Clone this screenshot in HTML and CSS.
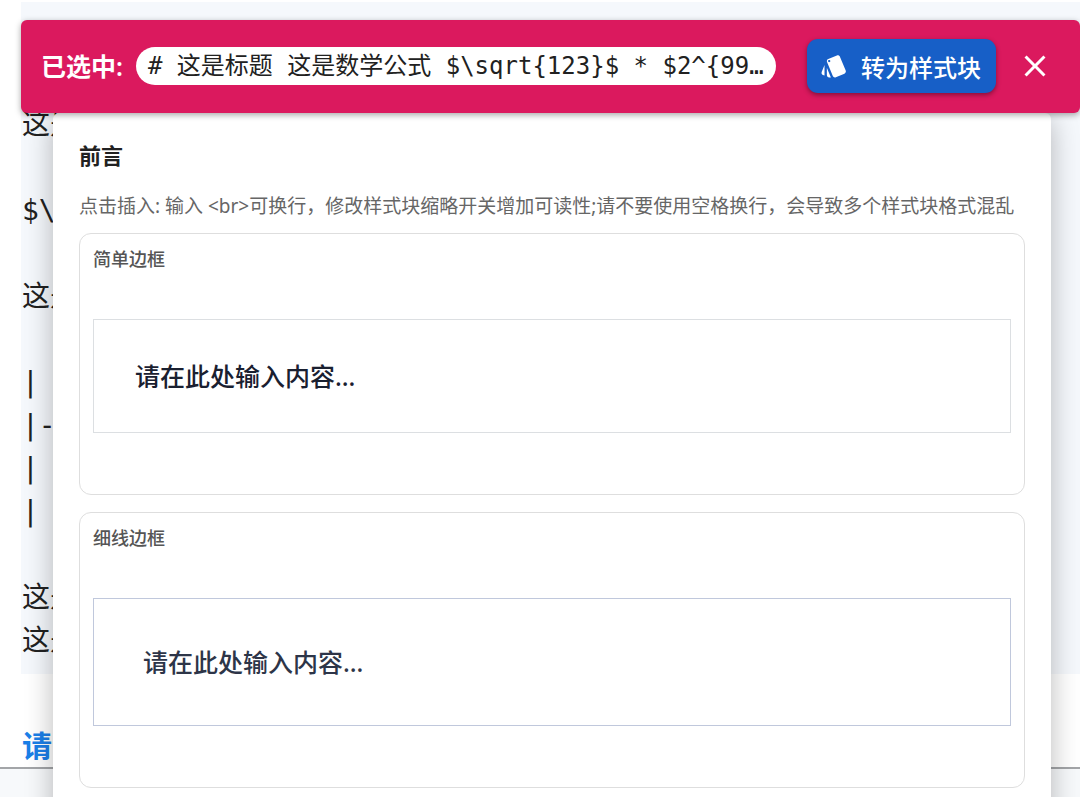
FILE: index.html
```
<!DOCTYPE html>
<html lang="zh-CN">
<head>
  <meta charset="utf-8">
  <title>样式块</title>
  <link rel="stylesheet" href="styles.css">
</head>
<body>
  <div class="page">
    <main class="editor-area">
      <pre class="editor"># 这是标题

这是数学公式

$\

这是

|
|-
|
|

这是
这是</pre>
      <p class="hint"><a href="#">请</a></p>
    </main>

    <div class="overlay">
      <!-- Selection toolbar -->
      <div class="toolbar">
        <span class="toolbar-label">已选中:</span>
        <code class="selection"># 这是标题 这是数学公式 $\sqrt{123}$ * $2^{99}$ 这是表格</code>
        <button class="convert" type="button">
          <svg viewBox="0 0 24 24" aria-hidden="true"><path d="M2.53 19.65l1.34.56v-9.03l-2.43 5.86c-.41 1.02.08 2.19 1.09 2.61zm19.5-3.7L17.07 3.98c-.31-.75-1.04-1.21-1.81-1.23-.26 0-.53.04-.79.15L7.1 5.95c-.75.31-1.21 1.03-1.23 1.8-.01.27.04.54.15.8l4.96 11.97c.31.76 1.05 1.22 1.83 1.23.26 0 .52-.05.77-.15l7.36-3.05c1.02-.42 1.51-1.59 1.09-2.6zM7.88 8.75c-.55 0-1-.45-1-1s.45-1 1-1 1 .45 1 1-.45 1-1 1zm-2 11c0 1.1.9 2 2 2h1.45l-3.45-8.34v6.34z"/></svg>
          转为样式块
        </button>
        <button class="close" type="button" aria-label="关闭">
          <svg viewBox="0 0 24 24" aria-hidden="true"><path d="M19 6.41L17.59 5 12 10.59 6.41 5 5 6.41 10.59 12 5 17.59 6.41 19 12 13.41 17.59 19 19 17.59 13.41 12z"/></svg>
        </button>
      </div>

      <!-- Style block list -->
      <section class="panel">
        <h2>前言</h2>
        <p class="tip">点击插入: 输入 &lt;br&gt;可换行，修改样式块缩略开关增加可读性;请不要使用空格换行，会导致多个样式块格式混乱</p>
        <div class="card">
          <h3>简单边框</h3>
          <div class="sample simple">请在此处输入内容...</div>
        </div>
        <div class="card">
          <h3>细线边框</h3>
          <div class="sample thin">请在此处输入内容...</div>
        </div>
      </section>
    </div>
  </div>
</body>
</html>
```
FILE: styles.css
```
* {
  box-sizing: border-box;
}
body {
  margin: 0;
  font-family: "Noto Sans", "Noto Sans CJK SC", sans-serif;
  color: #212121;
  background-color: #f7f9fb;
}
.page {
  position: relative;
  height: 100vh;
  overflow: hidden;
}

.editor-area {
  padding: 2px 0 0 21px;
  background-color: white;
  border-bottom: 2px solid #a3a5a8;
}
.editor {
  margin: 0;
  padding: 15px 0 12px 1px;
  background-color: #f5f8fc;
  font-family: "DejaVu Sans Mono", "Noto Sans CJK SC", monospace;
  font-size: 28px;
  line-height: 43px;
}
.hint {
  margin: 0;
  padding: 51px 0 0 1px;
  font-size: 30px;
  line-height: 42px;
  font-weight: bold;
}
.hint a {
  color: #1a7fe8;
  text-decoration: none;
}

.overlay {
  position: absolute;
  top: 20px;
  left: 21px;
  right: 0;
}
.toolbar {
  position: relative;
  z-index: 1;
  display: flex;
  align-items: center;
  padding: 19px 27px 20px 20px;
  background-color: #db195e;
  border-radius: 6px;
  box-shadow: 0 2px 6px rgba(0,0,0,0.35);
}
.toolbar-label {
  margin-right: 13px;
  color: white;
  font-size: 25px;
  line-height: 38px;
  font-weight: 600;
  white-space: nowrap;
}
.selection {
  flex: 1;
  min-width: 0;
  padding: 0 8px 0 12px;
  background-color: white;
  border-radius: 19px;
  font-family: "DejaVu Sans Mono", "Noto Sans CJK SC", monospace;
  font-size: 24px;
  line-height: 38px;
  white-space: nowrap;
  overflow: hidden;
  text-overflow: ellipsis;
}
.convert {
  display: flex;
  align-items: center;
  gap: 13px;
  height: 54px;
  margin: 0 21px 0 31px;
  padding: 0 15px 0 13px;
  border: none;
  border-radius: 11px;
  background-color: #175fc7;
  color: white;
  font-family: inherit;
  font-size: 24px;
  font-weight: 500;
  white-space: nowrap;
  box-shadow: 0 2px 5px rgba(0,0,0,0.4);
  cursor: pointer;
}
.convert svg {
  width: 28px;
  height: 28px;
  fill: white;
}
.close {
  display: flex;
  padding: 0;
  border: none;
  background: none;
  cursor: pointer;
}
.close svg {
  width: 36px;
  height: 36px;
  fill: white;
}

.panel {
  margin: 0 29px 0 32px;
  padding: 26px;
  background-color: white;
  border-radius: 6px;
  box-shadow: 0 6px 28px rgba(0,0,0,0.28);
}
.panel h2 {
  margin: 0;
  font-size: 22px;
  line-height: 32px;
}
.tip {
  margin: 20px 0 12px;
  color: #666;
  font-size: 19px;
  line-height: 30px;
  white-space: nowrap;
}
.card {
  margin-bottom: 17px;
  padding: 13px 13px 61px;
  border: 1px solid #dedede;
  border-radius: 12px;
}
.card h3 {
  margin: 0 0 48px;
  color: #555;
  font-size: 18px;
  line-height: 24px;
  font-weight: 500;
}
.sample {
  font-size: 25px;
  line-height: 40px;
  font-weight: 500;
}
.simple {
  padding: 36px 41px;
  border: 1px solid #dcdfe2;
  color: #1a2030;
}
.thin {
  padding: 43px 49px;
  border: 1px solid #c0c8dc;
  color: #2d3548;
}
```
